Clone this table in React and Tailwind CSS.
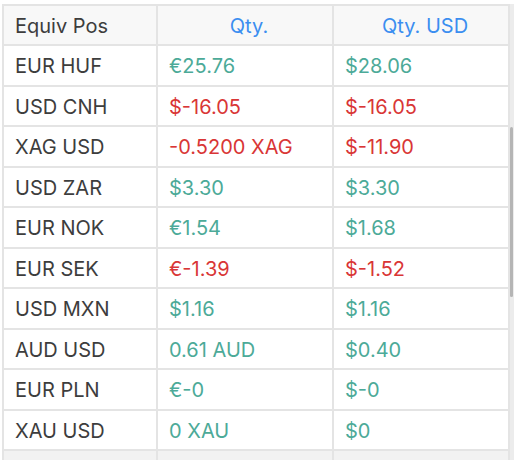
import React from "react";

const rows = [
  ["EUR HUF", "€25.76", "$28.06", "up"],
  ["USD CNH", "$-16.05", "$-16.05", "down"],
  ["XAG USD", "-0.5200 XAG", "$-11.90", "down"],
  ["USD ZAR", "$3.30", "$3.30", "up"],
  ["EUR NOK", "€1.54", "$1.68", "up"],
  ["EUR SEK", "€-1.39", "$-1.52", "down"],
  ["USD MXN", "$1.16", "$1.16", "up"],
  ["AUD USD", "0.61 AUD", "$0.40", "up"],
  ["EUR PLN", "€-0", "$-0", "up"],
  ["XAU USD", "0 XAU", "$0", "up"],
];

export default function App() {
  return (
    <div
      className="w-[514px] h-[460px] overflow-hidden bg-white flex pt-1 pl-[2px]"
      style={{ fontFamily: 'Inter, "Liberation Sans", Arial, sans-serif' }}
    >
      <div className="w-[508px] border-l-2 border-t-2 border-[#e4e4e4]">
        <div className="grid grid-cols-[154px_176px_176px] h-[40px] bg-[#f8f8f8] text-[20px]">
          <div className="flex items-center pt-[2px] pl-[11px] text-[#3d3d3d] border-r-2 border-b-2 border-[#e4e4e4]">
            Equiv Pos
          </div>
          <div className="flex items-center justify-center pt-[2px] pl-2 text-[#3b8ef0] border-r-2 border-b-2 border-[#e4e4e4]">
            Qty.
          </div>
          <div className="flex items-center justify-center pt-[2px] pl-2 text-[#3b8ef0] border-r-2 border-b-2 border-[#e4e4e4]">
            Qty. USD
          </div>
        </div>
        {rows.map(([pair, qty, usd, dir]) => {
          const color = dir === "up" ? "text-[#4caa98]" : "text-[#d93636]";
          return (
            <div key={pair} className="grid grid-cols-[154px_176px_176px] h-[40.5px] text-[20px]">
              <div className="flex items-center pt-[2px] pl-[11px] text-[#3d3d3d] border-r-2 border-b-2 border-[#e4e4e4]">
                {pair}
              </div>
              <div className={`flex items-center pt-[2px] pl-[11px] border-r-2 border-b-2 border-[#e4e4e4] ${color}`}>
                {qty}
              </div>
              <div className={`flex items-center pt-[2px] pl-[11px] border-r-2 border-b-2 border-[#e4e4e4] ${color}`}>
                {usd}
              </div>
            </div>
          );
        })}
        <div className="grid grid-cols-[154px_176px_176px] h-[40px] bg-[#f2f2f2]">
          <div className="border-r-2 border-[#e4e4e4]" />
          <div className="border-r-2 border-[#e4e4e4]" />
          <div className="border-r-2 border-[#e4e4e4]" />
        </div>
      </div>
      <div className="w-[4px] h-full bg-[#ececec] relative">
        <div className="absolute left-0 top-[123px] w-[3px] h-[170px] rounded-full bg-[#b5b5b5]" />
      </div>
    </div>
  );
}
